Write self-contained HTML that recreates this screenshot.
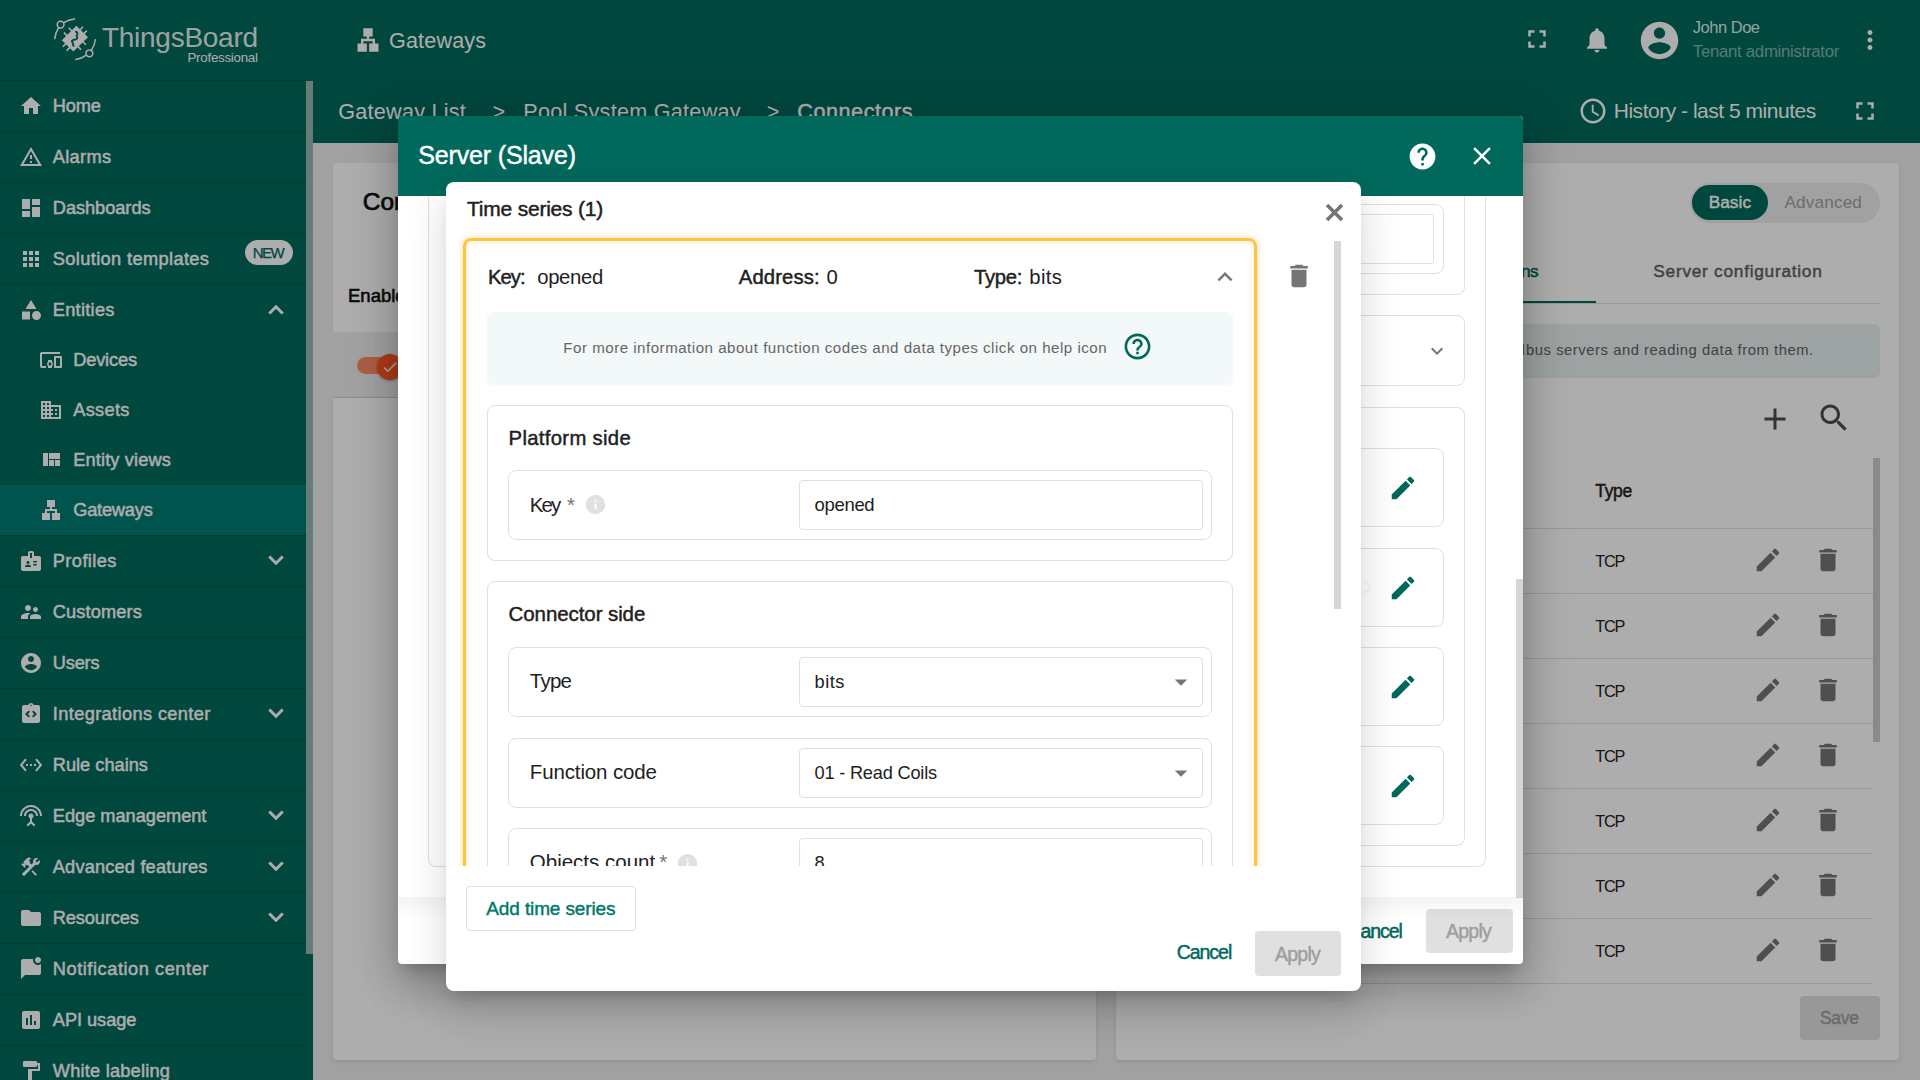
<!DOCTYPE html><html><head><meta charset="utf-8"><style>
html,body{margin:0;padding:0;width:1920px;height:1080px;overflow:hidden;background:#eeeeee;font-family:"Liberation Sans", sans-serif;}
.t{position:absolute;white-space:nowrap;line-height:1;}
svg{display:block}
</style></head><body>
<div style="position:absolute;left:0px;top:0px;width:1920px;height:80px;background:#00695c"></div>
<svg style="position:absolute;left:50px;top:14px" width="50" height="50" viewBox="50 14 50 50">
<g fill="none" stroke="#fff" stroke-width="1.5" stroke-linecap="round">
<circle cx="60.6" cy="24.6" r="3.4"/><path d="M58.6 27.6 C56.5 31 55.2 34.5 54.8 38.6"/><path d="M63.8 22.6 C67 20.5 71 19.3 74.7 18.9"/>
<circle cx="89.4" cy="53.3" r="3.4"/><path d="M91.3 50.4 C93.5 47 95 43.5 95.3 39.7"/><path d="M86.4 55.2 C83 57.6 79.5 59 76 59.6"/>
</g>
<g stroke="#fff" stroke-width="1.6" stroke-linecap="butt">
<path d="M67.4 36.1L63.9 32.6M72.2 31.3L68.7 27.8M79.6 30.3L83.1 26.8M83.4 34.1L86.9 30.6M66.3 43.3L62.8 46.8M70.2 47.1L66.7 50.6M82.4 41.3L85.9 44.8M77.5 46.1L81 49.6"/>
</g>
<path fill="#fff" d="M76.4 25.8 L88 37.2 L73.3 51.6 L61.8 40.2 Z"/>
<path fill="none" stroke="#00695c" stroke-width="1.9" d="M75.2 31.5 C77.5 31.8 78.3 34 76.6 35.8 C78.3 37.6 77 40 73.6 39.8 L72 40.8 L73.8 46.6"/>
</svg>
<div class="t" style="left:102.00px;top:23.80px;font-size:28px;color:rgba(255,255,255,0.92);letter-spacing:-0.276px;">ThingsBoard</div>
<div class="t" style="left:187.50px;top:51.24px;font-size:13.3px;color:#fff;letter-spacing:-0.247px;">Professional</div>
<svg style="position:absolute;left:354px;top:26px;overflow:visible;" width="28" height="28" viewBox="0 0 24 24"><path fill="#fff" d="M13 22h8v-7h-3v-4h-5V9h3V2H8v7h3v2H6v4H3v7h8v-7H8v-2h8v2h-3v7z"/></svg>
<div class="t" style="left:389.00px;top:31.40px;font-size:21.5px;color:#fff;letter-spacing:0.205px;">Gateways</div>
<svg style="position:absolute;left:1522px;top:24px;overflow:visible;" width="30" height="30" viewBox="0 0 24 24"><path fill="#fff" d="M7 14H5v5h5v-2H7v-3zm-2-4h2V7h3V5H5v5zm12 7h-3v2h5v-5h-2v3zM14 5v2h3v3h2V5h-5z"/></svg>
<svg style="position:absolute;left:1582px;top:25px;overflow:visible;" width="30" height="30" viewBox="0 0 24 24"><path fill="#fff" d="M12 22c1.1 0 2-.9 2-2h-4c0 1.1.89 2 2 2zm6-6v-5c0-3.07-1.64-5.64-4.5-6.32V4c0-.83-.67-1.5-1.5-1.5s-1.5.67-1.5 1.5v.68C7.63 5.36 6 7.92 6 11v5l-2 2v1h16v-1l-2-2z"/></svg>
<svg style="position:absolute;left:1637.25px;top:17.85px;overflow:visible;" width="45" height="45" viewBox="0 0 24 24"><path fill="#fff" d="M12 2C6.48 2 2 6.48 2 12s4.48 10 10 10 10-4.48 10-10S17.52 2 12 2zm0 3c1.66 0 3 1.34 3 3s-1.34 3-3 3-3-1.34-3-3 1.34-3 3-3zm0 14.2c-2.5 0-4.71-1.28-6-3.22.03-1.99 4-3.08 6-3.08 1.99 0 5.97 1.09 6 3.08-1.29 1.94-3.5 3.22-6 3.22z"/></svg>
<div class="t" style="left:1692.80px;top:19.43px;font-size:16.5px;color:rgba(255,255,255,0.9);letter-spacing:-0.489px;">John Doe</div>
<div class="t" style="left:1692.80px;top:43.58px;font-size:16.8px;color:rgba(255,255,255,0.5);letter-spacing:-0.290px;">Tenant administrator</div>
<svg style="position:absolute;left:1855px;top:25px;overflow:visible;" width="30" height="30" viewBox="0 0 24 24"><path fill="#fff" d="M12 8c1.1 0 2-.9 2-2s-.9-2-2-2-2 .9-2 2 .9 2 2 2zm0 2c-1.1 0-2 .9-2 2s.9 2 2 2 2-.9 2-2-.9-2-2-2zm0 6c-1.1 0-2 .9-2 2s.9 2 2 2 2-.9 2-2-.9-2-2-2z"/></svg>
<div style="position:absolute;left:0px;top:80px;width:306px;height:1000px;background:#00695c"></div>
<div style="position:absolute;left:306px;top:80px;width:7px;height:1000px;background:#00695c"></div>
<div style="position:absolute;left:306px;top:81px;width:7px;height:873px;background:#99b6b1"></div>
<div style="position:absolute;left:0px;top:80px;width:306px;height:1px;background:rgba(0,0,0,0.14)"></div>
<svg style="position:absolute;left:19px;top:94px;overflow:visible;" width="24" height="24" viewBox="0 0 24 24"><path fill="#fff" d="M10 20v-6h4v6h5v-8h3L12 3 2 12h3v8z"/></svg>
<div class="t" style="left:52.80px;top:97.09px;font-size:18.2px;color:#fff;-webkit-text-stroke:0.45px #fff;letter-spacing:-0.165px;">Home</div>
<div style="position:absolute;left:0px;top:131px;width:306px;height:1px;background:rgba(0,0,0,0.14)"></div>
<svg style="position:absolute;left:19px;top:145px;overflow:visible;" width="24" height="24" viewBox="0 0 24 24"><path fill="#fff" d="M12 5.99L19.53 19H4.47L12 5.99M12 2L1 21h22L12 2zm1 14h-2v2h2v-2zm0-6h-2v4h2v-4z"/></svg>
<div class="t" style="left:52.80px;top:148.09px;font-size:18.2px;color:#fff;-webkit-text-stroke:0.45px #fff;letter-spacing:0.320px;">Alarms</div>
<div style="position:absolute;left:0px;top:182px;width:306px;height:1px;background:rgba(0,0,0,0.14)"></div>
<svg style="position:absolute;left:19px;top:196px;overflow:visible;" width="24" height="24" viewBox="0 0 24 24"><path fill="#fff" d="M3 13h8V3H3v10zm0 8h8v-6H3v6zm10 0h8V11h-8v10zm0-18v6h8V3h-8z"/></svg>
<div class="t" style="left:52.80px;top:199.09px;font-size:18.2px;color:#fff;-webkit-text-stroke:0.45px #fff;letter-spacing:-0.033px;">Dashboards</div>
<div style="position:absolute;left:0px;top:233px;width:306px;height:1px;background:rgba(0,0,0,0.14)"></div>
<svg style="position:absolute;left:19px;top:247px;overflow:visible;" width="24" height="24" viewBox="0 0 24 24"><path fill="#fff" d="M4 8h4V4H4v4zm6 12h4v-4h-4v4zm-6 0h4v-4H4v4zm0-6h4v-4H4v4zm6 0h4v-4h-4v4zm6-10v4h4V4h-4zm-6 4h4V4h-4v4zm6 6h4v-4h-4v4zm0 6h4v-4h-4v4z"/></svg>
<div class="t" style="left:52.80px;top:250.09px;font-size:18.2px;color:#fff;-webkit-text-stroke:0.45px #fff;letter-spacing:0.383px;">Solution templates</div>
<div style="position:absolute;left:245px;top:240px;width:48px;height:25px;background:#fff;border-radius:13px"></div>
<div class="t" style="left:252.70px;top:245.30px;font-size:15px;color:#00695c;-webkit-text-stroke:0.25px #00695c;letter-spacing:-1.462px;">NEW</div>
<div style="position:absolute;left:0px;top:284px;width:306px;height:1px;background:rgba(0,0,0,0.14)"></div>
<svg style="position:absolute;left:19px;top:298px;overflow:visible;" width="24" height="24" viewBox="0 0 24 24"><path fill="#fff" d="M12 2l-5.5 9h11zM17.5 13a4.5 4.5 0 1 0 0 9a4.5 4.5 0 1 0 0-9zM3 13.5h8v8H3z"/></svg>
<div class="t" style="left:52.80px;top:301.09px;font-size:18.2px;color:#fff;-webkit-text-stroke:0.45px #fff;letter-spacing:0.286px;">Entities</div>
<svg style="position:absolute;left:261px;top:295px;overflow:visible;" width="30" height="30" viewBox="0 0 24 24"><path fill="#fff" stroke="#fff" stroke-width="0.45" d="M12 8l-6 6 1.41 1.41L12 10.83l4.59 4.58L18 14z"/></svg>
<svg style="position:absolute;left:39px;top:348px;overflow:visible;" width="24" height="24" viewBox="0 0 24 24"><path fill="#fff" d="M3 6h18V4H3c-1.1 0-2 .9-2 2v12c0 1.1.9 2 2 2h4v-2H3V6zm10 6H9v1.78c-.61.55-1 1.33-1 2.22s.39 1.67 1 2.22V20h4v-1.78c.61-.55 1-1.34 1-2.22s-.39-1.67-1-2.22V12zm-2 5.5c-.83 0-1.5-.67-1.5-1.5s.67-1.5 1.5-1.5 1.5.67 1.5 1.5-.67 1.5-1.5 1.5zM22 8h-6c-.5 0-1 .5-1 1v10c0 .5.5 1 1 1h6c.5 0 1-.5 1-1V9c0-.5-.5-1-1-1zm-1 10h-4v-8h4v8z"/></svg>
<div class="t" style="left:73.20px;top:351.09px;font-size:18.2px;color:#fff;-webkit-text-stroke:0.45px #fff;letter-spacing:-0.150px;">Devices</div>
<svg style="position:absolute;left:39px;top:398px;overflow:visible;" width="24" height="24" viewBox="0 0 24 24"><path fill="#fff" d="M12 7V3H2v18h20V7H12zM6 19H4v-2h2v2zm0-4H4v-2h2v2zm0-4H4V9h2v2zm0-4H4V5h2v2zm4 12H8v-2h2v2zm0-4H8v-2h2v2zm0-4H8V9h2v2zm0-4H8V5h2v2zm10 12h-8v-2h2v-2h-2v-2h2v-2h-2V9h8v10zm-2-8h-2v2h2v-2zm0 4h-2v2h2v-2z"/></svg>
<div class="t" style="left:73.20px;top:401.09px;font-size:18.2px;color:#fff;-webkit-text-stroke:0.45px #fff;letter-spacing:0.320px;">Assets</div>
<svg style="position:absolute;left:39px;top:448px;overflow:visible;" width="24" height="24" viewBox="0 0 24 24"><path fill="#fff" d="M10 18h5v-6h-5v6zm-6 0h5V5H4v13zm12 0h5v-6h-5v6zM10 5v6h11V5H10z"/></svg>
<div class="t" style="left:73.20px;top:451.09px;font-size:18.2px;color:#fff;-webkit-text-stroke:0.45px #fff;letter-spacing:0.155px;">Entity views</div>
<div style="position:absolute;left:0px;top:485px;width:306px;height:50px;background:#007d72"></div>
<svg style="position:absolute;left:39px;top:498px;overflow:visible;" width="24" height="24" viewBox="0 0 24 24"><path fill="#fff" d="M13 22h8v-7h-3v-4h-5V9h3V2H8v7h3v2H6v4H3v7h8v-7H8v-2h8v2h-3v7z"/></svg>
<div class="t" style="left:73.20px;top:501.09px;font-size:18.2px;color:#fff;-webkit-text-stroke:0.45px #fff;letter-spacing:-0.186px;">Gateways</div>
<div style="position:absolute;left:0px;top:535px;width:306px;height:1px;background:rgba(0,0,0,0.14)"></div>
<svg style="position:absolute;left:19px;top:549px;overflow:visible;" width="24" height="24" viewBox="0 0 24 24"><path fill="#fff" d="M20 7h-5V4c0-1.1-.9-2-2-2h-2c-1.1 0-2 .9-2 2v3H4c-1.1 0-2 .9-2 2v11c0 1.1.9 2 2 2h16c1.1 0 2-.9 2-2V9c0-1.1-.9-2-2-2zM9 12c.83 0 1.5.67 1.5 1.5S9.83 15 9 15s-1.5-.67-1.5-1.5S8.17 12 9 12zm3 6H6v-.43c0-.6.36-1.15.92-1.39.64-.28 1.34-.43 2.08-.43s1.44.15 2.08.43c.55.24.92.78.92 1.39V18zm1-9h-2V4h2v5zm4.25 7.5h-2.5c-.41 0-.75-.34-.75-.75s.34-.75.75-.75h2.5c.41 0 .75.34.75.75s-.34.75-.75.75zm0-3h-2.5c-.41 0-.75-.34-.75-.75s.34-.75.75-.75h2.5c.41 0 .75.34.75.75s-.34.75-.75.75z"/></svg>
<div class="t" style="left:52.80px;top:552.09px;font-size:18.2px;color:#fff;-webkit-text-stroke:0.45px #fff;letter-spacing:0.429px;">Profiles</div>
<svg style="position:absolute;left:261px;top:545.3px;overflow:visible;" width="30" height="30" viewBox="0 0 24 24"><path fill="#fff" stroke="#fff" stroke-width="0.45" d="M16.59 8.59L12 13.17 7.41 8.59 6 10l6 6 6-6z"/></svg>
<div style="position:absolute;left:0px;top:586px;width:306px;height:1px;background:rgba(0,0,0,0.14)"></div>
<svg style="position:absolute;left:19px;top:600px;overflow:visible;" width="24" height="24" viewBox="0 0 24 24"><path fill="#fff" d="M16.5 12c1.38 0 2.49-1.12 2.49-2.5S17.88 7 16.5 7C15.12 7 14 8.12 14 9.5s1.12 2.5 2.5 2.5zM9 11c1.66 0 2.99-1.34 2.99-3S10.66 5 9 5C7.34 5 6 6.34 6 8s1.34 3 3 3zm7.5 3c-1.83 0-5.5.92-5.5 2.75V19h11v-2.25c0-1.83-3.67-2.75-5.5-2.75zM9 13c-2.33 0-7 1.17-7 3.5V19h7v-2.25c0-.85.33-2.34 2.37-3.47C10.5 13.1 9.66 13 9 13z"/></svg>
<div class="t" style="left:52.80px;top:603.09px;font-size:18.2px;color:#fff;-webkit-text-stroke:0.45px #fff;letter-spacing:0.150px;">Customers</div>
<div style="position:absolute;left:0px;top:637px;width:306px;height:1px;background:rgba(0,0,0,0.14)"></div>
<svg style="position:absolute;left:19px;top:651px;overflow:visible;" width="24" height="24" viewBox="0 0 24 24"><path fill="#fff" d="M12 2C6.48 2 2 6.48 2 12s4.48 10 10 10 10-4.48 10-10S17.52 2 12 2zm0 3c1.66 0 3 1.34 3 3s-1.34 3-3 3-3-1.34-3-3 1.34-3 3-3zm0 14.2c-2.5 0-4.71-1.28-6-3.22.03-1.99 4-3.08 6-3.08 1.99 0 5.97 1.09 6 3.08-1.29 1.94-3.5 3.22-6 3.22z"/></svg>
<div class="t" style="left:52.80px;top:654.09px;font-size:18.2px;color:#fff;-webkit-text-stroke:0.45px #fff;letter-spacing:-0.200px;">Users</div>
<div style="position:absolute;left:0px;top:688px;width:306px;height:1px;background:rgba(0,0,0,0.14)"></div>
<svg style="position:absolute;left:19px;top:702px;overflow:visible;" width="24" height="24" viewBox="0 0 24 24"><path fill="#fff" d="M19 3h-4.18C14.4 1.84 13.3 1 12 1s-2.4.84-2.82 2H5c-1.1 0-2 .9-2 2v14c0 1.1.9 2 2 2h14c1.1 0 2-.9 2-2V5c0-1.1-.9-2-2-2zm-7-.25c.41 0 .75.34.75.75s-.34.75-.75.75-.75-.34-.75-.75.34-.75.75-.75zM11 14.17l-1.41 1.42L6 12l3.59-3.59L11 9.83 8.83 12 11 14.17zm3.41 1.42L13 14.17 15.17 12 13 9.83l1.41-1.42L18 12l-3.59 3.59z"/></svg>
<div class="t" style="left:52.80px;top:705.09px;font-size:18.2px;color:#fff;-webkit-text-stroke:0.45px #fff;letter-spacing:0.384px;">Integrations center</div>
<svg style="position:absolute;left:261px;top:698.3px;overflow:visible;" width="30" height="30" viewBox="0 0 24 24"><path fill="#fff" stroke="#fff" stroke-width="0.45" d="M16.59 8.59L12 13.17 7.41 8.59 6 10l6 6 6-6z"/></svg>
<div style="position:absolute;left:0px;top:739px;width:306px;height:1px;background:rgba(0,0,0,0.14)"></div>
<svg style="position:absolute;left:19px;top:753px;overflow:visible;" width="24" height="24" viewBox="0 0 24 24"><path fill="#fff" d="M7.77 6.76L6.23 5.48.82 12l5.41 6.52 1.54-1.28L3.42 12l4.35-5.24zM7 13h2v-2H7v2zm10-2h-2v2h2v-2zm-6 2h2v-2h-2v2zm6.77-7.52l-1.54 1.28L20.58 12l-4.35 5.24 1.54 1.28L23.18 12l-5.41-6.52z"/></svg>
<div class="t" style="left:52.80px;top:756.09px;font-size:18.2px;color:#fff;-webkit-text-stroke:0.45px #fff;letter-spacing:0.011px;">Rule chains</div>
<div style="position:absolute;left:0px;top:790px;width:306px;height:1px;background:rgba(0,0,0,0.14)"></div>
<svg style="position:absolute;left:19px;top:804px;overflow:visible;" width="24" height="24" viewBox="0 0 24 24"><path fill="#fff" d="M12 5c-3.87 0-7 3.13-7 7h2c0-2.76 2.24-5 5-5s5 2.24 5 5h2c0-3.87-3.13-7-7-7zm1 9.29c.88-.39 1.5-1.26 1.5-2.29 0-1.38-1.12-2.5-2.5-2.5S9.5 10.62 9.5 12c0 1.02.62 1.9 1.5 2.29v3.3L7.59 21 9 22.41l3-3 3 3L16.41 21 13 17.59v-3.3zM12 1C5.93 1 1 5.93 1 12h2c0-4.97 4.03-9 9-9s9 4.03 9 9h2c0-6.07-4.93-11-11-11z"/></svg>
<div class="t" style="left:52.80px;top:807.09px;font-size:18.2px;color:#fff;-webkit-text-stroke:0.45px #fff;letter-spacing:-0.006px;">Edge management</div>
<svg style="position:absolute;left:261px;top:800.3px;overflow:visible;" width="30" height="30" viewBox="0 0 24 24"><path fill="#fff" stroke="#fff" stroke-width="0.45" d="M16.59 8.59L12 13.17 7.41 8.59 6 10l6 6 6-6z"/></svg>
<div style="position:absolute;left:0px;top:841px;width:306px;height:1px;background:rgba(0,0,0,0.14)"></div>
<svg style="position:absolute;left:19px;top:855px;overflow:visible;" width="24" height="24" viewBox="0 0 24 24"><path fill="#fff" d="M13.78 15.17l-1.42 1.42 4.24 4.24 1.42-1.42-4.24-4.24zM17.5 10c1.93 0 3.5-1.57 3.5-3.5 0-.58-.16-1.12-.41-1.6l-2.7 2.7-1.49-1.49 2.7-2.7c-.48-.25-1.02-.41-1.6-.41C15.57 3 14 4.57 14 6.5c0 .41.08.8.21 1.16l-1.85 1.85-1.78-1.78.71-.71-1.41-1.41L12 3.49a3 3 0 0 0-4.24 0L4.22 7.03l1.41 1.41H2.81l-.71.71 3.54 3.54.71-.71V9.15l1.41 1.41.71-.71 1.78 1.78-7.41 7.41 2.12 2.12L16.34 9.79c.36.13.75.21 1.16.21z"/></svg>
<div class="t" style="left:52.80px;top:858.09px;font-size:18.2px;color:#fff;-webkit-text-stroke:0.45px #fff;letter-spacing:0.182px;">Advanced features</div>
<svg style="position:absolute;left:261px;top:851.3px;overflow:visible;" width="30" height="30" viewBox="0 0 24 24"><path fill="#fff" stroke="#fff" stroke-width="0.45" d="M16.59 8.59L12 13.17 7.41 8.59 6 10l6 6 6-6z"/></svg>
<div style="position:absolute;left:0px;top:892px;width:306px;height:1px;background:rgba(0,0,0,0.14)"></div>
<svg style="position:absolute;left:19px;top:906px;overflow:visible;" width="24" height="24" viewBox="0 0 24 24"><path fill="#fff" d="M10 4H4c-1.1 0-1.99.9-1.99 2L2 18c0 1.1.9 2 2 2h16c1.1 0 2-.9 2-2V8c0-1.1-.9-2-2-2h-8l-2-2z"/></svg>
<div class="t" style="left:52.80px;top:909.09px;font-size:18.2px;color:#fff;-webkit-text-stroke:0.45px #fff;letter-spacing:-0.099px;">Resources</div>
<svg style="position:absolute;left:261px;top:902.3px;overflow:visible;" width="30" height="30" viewBox="0 0 24 24"><path fill="#fff" stroke="#fff" stroke-width="0.45" d="M16.59 8.59L12 13.17 7.41 8.59 6 10l6 6 6-6z"/></svg>
<div style="position:absolute;left:0px;top:943px;width:306px;height:1px;background:rgba(0,0,0,0.14)"></div>
<svg style="position:absolute;left:19px;top:957px;overflow:visible;" width="24" height="24" viewBox="0 0 24 24"><path fill="#fff" d="M22 6.98V16c0 1.1-.9 2-2 2H6l-4 4V4c0-1.1.9-2 2-2h10.1c-.06.32-.1.66-.1 1 0 2.76 2.24 5 5 5 1.13 0 2.16-.39 3-1.02zM16 3c0 1.66 1.34 3 3 3s3-1.34 3-3-1.34-3-3-3-3 1.34-3 3z"/></svg>
<div class="t" style="left:52.80px;top:960.09px;font-size:18.2px;color:#fff;-webkit-text-stroke:0.45px #fff;letter-spacing:0.556px;">Notification center</div>
<div style="position:absolute;left:0px;top:994px;width:306px;height:1px;background:rgba(0,0,0,0.14)"></div>
<svg style="position:absolute;left:19px;top:1008px;overflow:visible;" width="24" height="24" viewBox="0 0 24 24"><path fill="#fff" d="M19 3H5c-1.1 0-2 .9-2 2v14c0 1.1.9 2 2 2h14c1.1 0 2-.9 2-2V5c0-1.1-.9-2-2-2zM9 17H7v-7h2v7zm4 0h-2V7h2v10zm4 0h-2v-4h2v4z"/></svg>
<div class="t" style="left:52.80px;top:1011.09px;font-size:18.2px;color:#fff;-webkit-text-stroke:0.45px #fff;letter-spacing:-0.037px;">API usage</div>
<div style="position:absolute;left:0px;top:1045px;width:306px;height:1px;background:rgba(0,0,0,0.14)"></div>
<svg style="position:absolute;left:19px;top:1059px;overflow:visible;" width="24" height="24" viewBox="0 0 24 24"><path fill="#fff" d="M18 4V3c0-.55-.45-1-1-1H5c-.55 0-1 .45-1 1v4c0 .55.45 1 1 1h12c.55 0 1-.45 1-1V6h1v4H9v11c0 .55.45 1 1 1h2c.55 0 1-.45 1-1v-9h8V4h-3z"/></svg>
<div class="t" style="left:52.80px;top:1062.09px;font-size:18.2px;color:#fff;-webkit-text-stroke:0.45px #fff;letter-spacing:0.223px;">White labeling</div>
<div style="position:absolute;left:313px;top:80px;width:1607px;height:63px;background:#00695c"></div>
<div class="t" style="left:338.30px;top:101.42px;font-size:21.6px;color:#fff;letter-spacing:0.241px;">Gateway List</div>
<div class="t" style="left:492.50px;top:101.42px;font-size:21.6px;color:#fff;">&gt;</div>
<div class="t" style="left:523.30px;top:101.42px;font-size:21.6px;color:#fff;letter-spacing:0.270px;">Pool System Gateway</div>
<div class="t" style="left:766.70px;top:101.42px;font-size:21.6px;color:#fff;">&gt;</div>
<div class="t" style="left:797.30px;top:101.42px;font-size:21.6px;color:#fff;-webkit-text-stroke:0.45px #fff;letter-spacing:0.546px;">Connectors</div>
<svg style="position:absolute;left:1578px;top:96px;overflow:visible;" width="30" height="30" viewBox="0 0 24 24"><path fill="#fff" d="M11.99 2C6.47 2 2 6.48 2 12s4.47 10 9.99 10C17.52 22 22 17.52 22 12S17.52 2 11.99 2zM12 20c-4.42 0-8-3.58-8-8s3.58-8 8-8 8 3.58 8 8-3.58 8-8 8zm.5-13H11v6l5.25 3.15.75-1.23-4.5-2.67z"/></svg>
<div class="t" style="left:1613.75px;top:99.72px;font-size:21px;color:#fff;letter-spacing:-0.481px;">History - last 5 minutes</div>
<svg style="position:absolute;left:1850px;top:96px;overflow:visible;" width="30" height="30" viewBox="0 0 24 24"><path fill="#fff" d="M7 14H5v5h5v-2H7v-3zm-2-4h2V7h3V5H5v5zm12 7h-3v2h5v-5h-2v3zM14 5v2h3v3h2V5h-5z"/></svg>
<div style="position:absolute;left:313px;top:143px;width:1607px;height:937px;background:#eeeeee"></div>
<div style="position:absolute;left:333px;top:163px;width:763px;height:169px;background:#fff;border-radius:4px 4px 0 0"></div>
<div style="position:absolute;left:333px;top:398px;width:763px;height:662px;background:#fff;border-radius:0 0 4px 4px;box-shadow:0 2px 5px rgba(0,0,0,0.1)"></div>
<div style="position:absolute;left:333px;top:397px;width:763px;height:1px;background:rgba(0,0,0,0.12)"></div>
<div class="t" style="left:362.80px;top:189.76px;font-size:24.5px;color:#111;-webkit-text-stroke:0.7px #111;">Connectors</div>
<div class="t" style="left:348.00px;top:286.54px;font-size:18.5px;color:#111;-webkit-text-stroke:0.6px #111;">Enabled</div>
<div style="position:absolute;left:357px;top:357px;width:40px;height:17px;background:#ff8a65;border-radius:9px"></div>
<div style="position:absolute;left:377px;top:354px;width:26px;height:26px;border-radius:50%;background:#ff5722;box-shadow:0 1px 3px rgba(0,0,0,.3)"></div>
<svg style="position:absolute;left:381px;top:358px;overflow:visible;" width="18" height="18" viewBox="0 0 24 24"><path fill="#fff" d="M9 16.17L4.83 12l-1.42 1.41L9 19 21 7l-1.41-1.41z"/></svg>
<div style="position:absolute;left:1116px;top:163px;width:783px;height:897px;background:#fff;border-radius:4px;box-shadow:0 2px 5px rgba(0,0,0,0.1)"></div>
<div style="position:absolute;left:1690px;top:183px;width:190px;height:40px;background:#eeeeee;border-radius:20px"></div>
<div style="position:absolute;left:1692px;top:185px;width:76px;height:35px;background:#00695c;border-radius:18px"></div>
<div class="t" style="left:1708.75px;top:194.04px;font-size:17.2px;color:#fff;-webkit-text-stroke:0.45px #fff;letter-spacing:0.049px;">Basic</div>
<div class="t" style="left:1784.50px;top:194.04px;font-size:17.2px;color:#a0a0a0;letter-spacing:0.137px;">Advanced</div>
<div class="t" style="left:1400.00px;top:263.06px;font-size:17.3px;color:#00695c;-webkit-text-stroke:0.45px #00695c;letter-spacing:-0.661px;">Master connections</div>
<div style="position:absolute;left:1136px;top:301px;width:460px;height:2px;background:#00695c"></div>
<div style="position:absolute;left:1136px;top:303px;width:744px;height:1px;background:rgba(0,0,0,0.12)"></div>
<div class="t" style="left:1653.30px;top:263.06px;font-size:17.3px;color:#616161;-webkit-text-stroke:0.45px #616161;letter-spacing:0.730px;">Server configuration</div>
<div style="position:absolute;left:1136px;top:324px;width:744px;height:54px;background:#e8f0ef;border-radius:6px"></div>
<div class="t" style="left:1526.00px;top:343.17px;font-size:14.8px;color:#616161;letter-spacing:0.546px;">bus servers and reading data from them.</div>
<div class="t" style="left:1516.50px;top:343.17px;font-size:14.8px;color:#616161;">d</div>
<svg style="position:absolute;left:1757px;top:401px;overflow:visible;" width="36" height="36" viewBox="0 0 24 24"><path fill="rgba(0,0,0,0.7)" d="M19 13h-6v6h-2v-6H5v-2h6V5h2v6h6v2z"/></svg>
<svg style="position:absolute;left:1816px;top:400px;overflow:visible;" width="36" height="36" viewBox="0 0 24 24"><path fill="rgba(0,0,0,0.7)" d="M15.5 14h-.79l-.28-.27C15.41 12.59 16 11.11 16 9.5 16 5.91 13.09 3 9.5 3S3 5.91 3 9.5 5.91 16 9.5 16c1.61 0 3.09-.59 4.23-1.57l.27.28v.79l5 4.99L20.49 19l-4.99-5zm-6 0C7.01 14 5 11.99 5 9.5S7.01 5 9.5 5 14 7.01 14 9.5 11.99 14 9.5 14z"/></svg>
<div class="t" style="left:1595.30px;top:482.69px;font-size:17.5px;color:#212121;-webkit-text-stroke:0.45px #212121;letter-spacing:-0.325px;">Type</div>
<div style="position:absolute;left:1136px;top:528px;width:737px;height:1px;background:rgba(0,0,0,0.12)"></div>
<div class="t" style="left:1595.30px;top:552.70px;font-size:16.3px;color:#212121;letter-spacing:-1.300px;">TCP</div>
<svg style="position:absolute;left:1753px;top:545px;overflow:visible;" width="30" height="30" viewBox="0 0 24 24"><path fill="rgba(0,0,0,0.54)" d="M3 17.25V21h3.75L17.81 9.94l-3.75-3.75L3 17.25zM20.71 7.04c.39-.39.39-1.02 0-1.41l-2.34-2.34c-.39-.39-1.02-.39-1.41 0l-1.83 1.83 3.75 3.75 1.83-1.83z"/></svg>
<svg style="position:absolute;left:1813px;top:545px;overflow:visible;" width="30" height="30" viewBox="0 0 24 24"><path fill="rgba(0,0,0,0.54)" d="M6 19c0 1.1.9 2 2 2h8c1.1 0 2-.9 2-2V7H6v12zM19 4h-3.5l-1-1h-5l-1 1H5v2h14V4z"/></svg>
<div style="position:absolute;left:1136px;top:593px;width:737px;height:1px;background:rgba(0,0,0,0.12)"></div>
<div class="t" style="left:1595.30px;top:617.70px;font-size:16.3px;color:#212121;letter-spacing:-1.300px;">TCP</div>
<svg style="position:absolute;left:1753px;top:610px;overflow:visible;" width="30" height="30" viewBox="0 0 24 24"><path fill="rgba(0,0,0,0.54)" d="M3 17.25V21h3.75L17.81 9.94l-3.75-3.75L3 17.25zM20.71 7.04c.39-.39.39-1.02 0-1.41l-2.34-2.34c-.39-.39-1.02-.39-1.41 0l-1.83 1.83 3.75 3.75 1.83-1.83z"/></svg>
<svg style="position:absolute;left:1813px;top:610px;overflow:visible;" width="30" height="30" viewBox="0 0 24 24"><path fill="rgba(0,0,0,0.54)" d="M6 19c0 1.1.9 2 2 2h8c1.1 0 2-.9 2-2V7H6v12zM19 4h-3.5l-1-1h-5l-1 1H5v2h14V4z"/></svg>
<div style="position:absolute;left:1136px;top:658px;width:737px;height:1px;background:rgba(0,0,0,0.12)"></div>
<div class="t" style="left:1595.30px;top:682.70px;font-size:16.3px;color:#212121;letter-spacing:-1.300px;">TCP</div>
<svg style="position:absolute;left:1753px;top:675px;overflow:visible;" width="30" height="30" viewBox="0 0 24 24"><path fill="rgba(0,0,0,0.54)" d="M3 17.25V21h3.75L17.81 9.94l-3.75-3.75L3 17.25zM20.71 7.04c.39-.39.39-1.02 0-1.41l-2.34-2.34c-.39-.39-1.02-.39-1.41 0l-1.83 1.83 3.75 3.75 1.83-1.83z"/></svg>
<svg style="position:absolute;left:1813px;top:675px;overflow:visible;" width="30" height="30" viewBox="0 0 24 24"><path fill="rgba(0,0,0,0.54)" d="M6 19c0 1.1.9 2 2 2h8c1.1 0 2-.9 2-2V7H6v12zM19 4h-3.5l-1-1h-5l-1 1H5v2h14V4z"/></svg>
<div style="position:absolute;left:1136px;top:723px;width:737px;height:1px;background:rgba(0,0,0,0.12)"></div>
<div class="t" style="left:1595.30px;top:747.70px;font-size:16.3px;color:#212121;letter-spacing:-1.300px;">TCP</div>
<svg style="position:absolute;left:1753px;top:740px;overflow:visible;" width="30" height="30" viewBox="0 0 24 24"><path fill="rgba(0,0,0,0.54)" d="M3 17.25V21h3.75L17.81 9.94l-3.75-3.75L3 17.25zM20.71 7.04c.39-.39.39-1.02 0-1.41l-2.34-2.34c-.39-.39-1.02-.39-1.41 0l-1.83 1.83 3.75 3.75 1.83-1.83z"/></svg>
<svg style="position:absolute;left:1813px;top:740px;overflow:visible;" width="30" height="30" viewBox="0 0 24 24"><path fill="rgba(0,0,0,0.54)" d="M6 19c0 1.1.9 2 2 2h8c1.1 0 2-.9 2-2V7H6v12zM19 4h-3.5l-1-1h-5l-1 1H5v2h14V4z"/></svg>
<div style="position:absolute;left:1136px;top:788px;width:737px;height:1px;background:rgba(0,0,0,0.12)"></div>
<div class="t" style="left:1595.30px;top:812.70px;font-size:16.3px;color:#212121;letter-spacing:-1.300px;">TCP</div>
<svg style="position:absolute;left:1753px;top:805px;overflow:visible;" width="30" height="30" viewBox="0 0 24 24"><path fill="rgba(0,0,0,0.54)" d="M3 17.25V21h3.75L17.81 9.94l-3.75-3.75L3 17.25zM20.71 7.04c.39-.39.39-1.02 0-1.41l-2.34-2.34c-.39-.39-1.02-.39-1.41 0l-1.83 1.83 3.75 3.75 1.83-1.83z"/></svg>
<svg style="position:absolute;left:1813px;top:805px;overflow:visible;" width="30" height="30" viewBox="0 0 24 24"><path fill="rgba(0,0,0,0.54)" d="M6 19c0 1.1.9 2 2 2h8c1.1 0 2-.9 2-2V7H6v12zM19 4h-3.5l-1-1h-5l-1 1H5v2h14V4z"/></svg>
<div style="position:absolute;left:1136px;top:853px;width:737px;height:1px;background:rgba(0,0,0,0.12)"></div>
<div class="t" style="left:1595.30px;top:877.70px;font-size:16.3px;color:#212121;letter-spacing:-1.300px;">TCP</div>
<svg style="position:absolute;left:1753px;top:870px;overflow:visible;" width="30" height="30" viewBox="0 0 24 24"><path fill="rgba(0,0,0,0.54)" d="M3 17.25V21h3.75L17.81 9.94l-3.75-3.75L3 17.25zM20.71 7.04c.39-.39.39-1.02 0-1.41l-2.34-2.34c-.39-.39-1.02-.39-1.41 0l-1.83 1.83 3.75 3.75 1.83-1.83z"/></svg>
<svg style="position:absolute;left:1813px;top:870px;overflow:visible;" width="30" height="30" viewBox="0 0 24 24"><path fill="rgba(0,0,0,0.54)" d="M6 19c0 1.1.9 2 2 2h8c1.1 0 2-.9 2-2V7H6v12zM19 4h-3.5l-1-1h-5l-1 1H5v2h14V4z"/></svg>
<div style="position:absolute;left:1136px;top:918px;width:737px;height:1px;background:rgba(0,0,0,0.12)"></div>
<div class="t" style="left:1595.30px;top:942.70px;font-size:16.3px;color:#212121;letter-spacing:-1.300px;">TCP</div>
<svg style="position:absolute;left:1753px;top:935px;overflow:visible;" width="30" height="30" viewBox="0 0 24 24"><path fill="rgba(0,0,0,0.54)" d="M3 17.25V21h3.75L17.81 9.94l-3.75-3.75L3 17.25zM20.71 7.04c.39-.39.39-1.02 0-1.41l-2.34-2.34c-.39-.39-1.02-.39-1.41 0l-1.83 1.83 3.75 3.75 1.83-1.83z"/></svg>
<svg style="position:absolute;left:1813px;top:935px;overflow:visible;" width="30" height="30" viewBox="0 0 24 24"><path fill="rgba(0,0,0,0.54)" d="M6 19c0 1.1.9 2 2 2h8c1.1 0 2-.9 2-2V7H6v12zM19 4h-3.5l-1-1h-5l-1 1H5v2h14V4z"/></svg>
<div style="position:absolute;left:1136px;top:983px;width:737px;height:1px;background:rgba(0,0,0,0.12)"></div>
<div style="position:absolute;left:1873px;top:458px;width:7px;height:284px;background:rgba(0,0,0,0.2)"></div>
<div style="position:absolute;left:1800px;top:996px;width:80px;height:44px;background:rgba(0,0,0,0.12);border-radius:4px"></div>
<div class="t" style="left:1820.00px;top:1009.59px;font-size:17.5px;color:#9e9e9e;-webkit-text-stroke:0.45px #9e9e9e;letter-spacing:-0.300px;">Save</div>
<div style="position:absolute;left:0px;top:0px;width:1920px;height:1080px;background:rgba(0,0,0,0.32)"></div>
<div style="position:absolute;left:398px;top:116px;width:1125px;height:848px;background:#fff;border-radius:4px;box-shadow:0 11px 15px -7px rgba(0,0,0,.2),0 24px 38px 3px rgba(0,0,0,.14),0 9px 46px 8px rgba(0,0,0,.12);overflow:hidden">
<div style="position:absolute;left:0px;top:0px;width:1125px;height:80px;background:#00695c"></div>
</div>
<div class="t" style="left:418.20px;top:142.74px;font-size:25px;color:#fff;-webkit-text-stroke:0.45px #fff;letter-spacing:-0.150px;">Server (Slave)</div>
<svg style="position:absolute;left:1407px;top:141px;overflow:visible;" width="31" height="31" viewBox="0 0 24 24"><path fill="#fff" d="M12 2C6.48 2 2 6.48 2 12s4.48 10 10 10 10-4.48 10-10S17.52 2 12 2zm1 17h-2v-2h2v2zm2.07-7.75l-.9.92C13.45 12.9 13 13.5 13 15h-2v-.5c0-1.1.45-2.1 1.17-2.83l1.24-1.26c.37-.36.59-.86.59-1.41 0-1.1-.9-2-2-2s-2 .9-2 2H8c0-2.21 1.79-4 4-4s4 1.79 4 4c0 .88-.36 1.68-.93 2.25z"/></svg>
<svg style="position:absolute;left:1467px;top:141px;overflow:visible;" width="30" height="30" viewBox="0 0 24 24"><path fill="#fff" d="M19 6.41L17.59 5 12 10.59 6.41 5 5 6.41 10.59 12 5 17.59 6.41 19 12 13.41 17.59 19 19 17.59 13.41 12z"/></svg>
<div style="position:absolute;left:428px;top:196px;width:1058px;height:671px;border:1px solid #e0e0e0;border-top:none;border-radius:0 0 8px 8px;box-sizing:border-box"></div>
<div style="position:absolute;left:1000px;top:150px;width:465px;height:145px;border:1px solid #e0e0e0;border-radius:8px;box-sizing:border-box;clip-path:inset(46px 0 0 0)"></div>
<div style="position:absolute;left:1000px;top:204px;width:444px;height:70px;border:1px solid #e0e0e0;border-radius:8px;box-sizing:border-box"></div>
<div style="position:absolute;left:1000px;top:214px;width:434px;height:50px;border:1px solid #e0e0e0;border-radius:4px;box-sizing:border-box"></div>
<div style="position:absolute;left:1000px;top:315px;width:465px;height:71px;border:1px solid #e0e0e0;border-radius:8px;box-sizing:border-box"></div>
<svg style="position:absolute;left:1425px;top:339px;overflow:visible;" width="24" height="24" viewBox="0 0 24 24"><path fill="rgba(0,0,0,0.54)" d="M16.59 8.59L12 13.17 7.41 8.59 6 10l6 6 6-6z"/></svg>
<div style="position:absolute;left:1000px;top:407px;width:465px;height:439px;border:1px solid #e0e0e0;border-radius:8px;box-sizing:border-box"></div>
<div style="position:absolute;left:1000px;top:448px;width:444px;height:79px;border:1px solid #e0e0e0;border-radius:8px;box-sizing:border-box"></div>
<svg style="position:absolute;left:1388px;top:472.5px;overflow:visible;" width="30" height="30" viewBox="0 0 24 24"><path fill="#00695c" d="M3 17.25V21h3.75L17.81 9.94l-3.75-3.75L3 17.25zM20.71 7.04c.39-.39.39-1.02 0-1.41l-2.34-2.34c-.39-.39-1.02-.39-1.41 0l-1.83 1.83 3.75 3.75 1.83-1.83z"/></svg>
<div style="position:absolute;left:1000px;top:548px;width:444px;height:79px;border:1px solid #e0e0e0;border-radius:8px;box-sizing:border-box"></div>
<svg style="position:absolute;left:1388px;top:572.5px;overflow:visible;" width="30" height="30" viewBox="0 0 24 24"><path fill="#00695c" d="M3 17.25V21h3.75L17.81 9.94l-3.75-3.75L3 17.25zM20.71 7.04c.39-.39.39-1.02 0-1.41l-2.34-2.34c-.39-.39-1.02-.39-1.41 0l-1.83 1.83 3.75 3.75 1.83-1.83z"/></svg>
<div style="position:absolute;left:1000px;top:647px;width:444px;height:79px;border:1px solid #e0e0e0;border-radius:8px;box-sizing:border-box"></div>
<svg style="position:absolute;left:1388px;top:671.5px;overflow:visible;" width="30" height="30" viewBox="0 0 24 24"><path fill="#00695c" d="M3 17.25V21h3.75L17.81 9.94l-3.75-3.75L3 17.25zM20.71 7.04c.39-.39.39-1.02 0-1.41l-2.34-2.34c-.39-.39-1.02-.39-1.41 0l-1.83 1.83 3.75 3.75 1.83-1.83z"/></svg>
<div style="position:absolute;left:1000px;top:746px;width:444px;height:79px;border:1px solid #e0e0e0;border-radius:8px;box-sizing:border-box"></div>
<svg style="position:absolute;left:1388px;top:770.5px;overflow:visible;" width="30" height="30" viewBox="0 0 24 24"><path fill="#00695c" d="M3 17.25V21h3.75L17.81 9.94l-3.75-3.75L3 17.25zM20.71 7.04c.39-.39.39-1.02 0-1.41l-2.34-2.34c-.39-.39-1.02-.39-1.41 0l-1.83 1.83 3.75 3.75 1.83-1.83z"/></svg>
<div style="position:absolute;left:1361px;top:579px;width:0;height:0;border-top:8px solid transparent;border-bottom:8px solid transparent;border-left:8px solid #fff;filter:drop-shadow(1px 0 2px rgba(0,0,0,0.08))"></div>
<div style="position:absolute;left:1516px;top:579px;width:7px;height:319px;background:#d6d6d6"></div>
<div style="position:absolute;left:398px;top:897px;width:1125px;height:22px;background:linear-gradient(rgba(0,0,0,0.045),rgba(0,0,0,0))"></div>
<div class="t" style="left:1347.40px;top:921.79px;font-size:19.5px;color:#00695c;-webkit-text-stroke:0.45px #00695c;letter-spacing:-1.029px;">Cancel</div>
<div style="position:absolute;left:1426px;top:909px;width:87px;height:44px;background:rgba(0,0,0,0.12);border-radius:4px"></div>
<div class="t" style="left:1446.00px;top:921.79px;font-size:19.5px;color:#9e9e9e;-webkit-text-stroke:0.45px #9e9e9e;letter-spacing:-0.762px;">Apply</div>
<div style="position:absolute;left:446px;top:182px;width:915px;height:809px;background:#fff;border-radius:8px;box-shadow:0 11px 15px -7px rgba(0,0,0,.15),0 24px 38px 3px rgba(0,0,0,.08),0 9px 46px 8px rgba(0,0,0,.05)"></div>
<div class="t" style="left:467.00px;top:198.32px;font-size:21px;color:#212121;-webkit-text-stroke:0.45px #212121;letter-spacing:-0.216px;">Time series (1)</div>
<svg style="position:absolute;left:1324px;top:202px" width="21" height="21" viewBox="0 0 21 21"><path d="M3 3L18 18M18 3L3 18" stroke="#757575" stroke-width="3.6" stroke-linecap="butt"/></svg>
<div style="position:absolute;left:446px;top:230px;width:915px;height:636px;overflow:hidden">
<div style="position:absolute;left:-446px;top:-230px;width:1920px;height:1080px">
<div style="position:absolute;left:463px;top:238px;width:794px;height:900px;border:3px solid #fcc53a;border-radius:8px;box-sizing:border-box;box-shadow:0 0 7px rgba(255,160,50,0.4),inset 0 0 6px rgba(255,160,50,0.22)"></div>
<div class="t" style="left:488.00px;top:266.62px;font-size:20.3px;color:#212121;-webkit-text-stroke:0.45px #212121;letter-spacing:-1.000px;">Key:</div>
<div class="t" style="left:537.20px;top:266.62px;font-size:20.3px;color:#212121;letter-spacing:-0.340px;">opened</div>
<div class="t" style="left:738.80px;top:266.62px;font-size:20.3px;color:#212121;-webkit-text-stroke:0.45px #212121;letter-spacing:0.102px;">Address:</div>
<div class="t" style="left:826.50px;top:266.62px;font-size:20.3px;color:#212121;">0</div>
<div class="t" style="left:974.00px;top:266.62px;font-size:20.3px;color:#212121;-webkit-text-stroke:0.45px #212121;letter-spacing:-0.308px;">Type:</div>
<div class="t" style="left:1029.30px;top:266.62px;font-size:20.3px;color:#212121;letter-spacing:0.378px;">bits</div>
<svg style="position:absolute;left:1210px;top:262px;overflow:visible;" width="30" height="30" viewBox="0 0 24 24"><path fill="rgba(0,0,0,0.54)" d="M12 8l-6 6 1.41 1.41L12 10.83l4.59 4.58L18 14z"/></svg>
<div style="position:absolute;left:487px;top:312px;width:746px;height:73px;background:#f3f8f8;border-radius:6px"></div>
<div class="t" style="left:563.30px;top:340.12px;font-size:15.1px;color:#666;letter-spacing:0.505px;">For more information about function codes and data types click on help icon</div>
<svg style="position:absolute;left:1122px;top:331px;overflow:visible;" width="31" height="31" viewBox="0 0 24 24"><path fill="#00695c" d="M11 18h2v-2h-2v2zm1-16C6.48 2 2 6.48 2 12s4.48 10 10 10 10-4.48 10-10S17.52 2 12 2zm0 18c-4.41 0-8-3.59-8-8s3.59-8 8-8 8 3.59 8 8-3.59 8-8 8zm0-14c-2.21 0-4 1.79-4 4h2c0-1.1.9-2 2-2s2 .9 2 2c0 2-3 1.75-3 5h2c0-2.25 3-2.5 3-5 0-2.21-1.79-4-4-4z"/></svg>
<div style="position:absolute;left:487px;top:405px;width:746px;height:156px;border:1px solid #e0e0e0;border-radius:8px;box-sizing:border-box"></div>
<div class="t" style="left:508.60px;top:427.72px;font-size:20.3px;color:#212121;-webkit-text-stroke:0.45px #212121;letter-spacing:0.312px;">Platform side</div>
<div style="position:absolute;left:508px;top:470px;width:704px;height:70px;border:1px solid #e0e0e0;border-radius:8px;box-sizing:border-box"></div>
<div class="t" style="left:529.80px;top:494.85px;font-size:20.5px;color:#212121;letter-spacing:-1.981px;">Key</div>
<div class="t" style="left:567.00px;top:494.85px;font-size:20.5px;color:#757575;">*</div>
<svg style="position:absolute;left:584px;top:493px;overflow:visible;" width="23" height="23" viewBox="0 0 24 24"><path fill="rgba(0,0,0,0.12)" d="M12 2C6.48 2 2 6.48 2 12s4.48 10 10 10 10-4.48 10-10S17.52 2 12 2zm1 15h-2v-6h2v6zm0-8h-2V7h2v2z"/></svg>
<div style="position:absolute;left:799px;top:480px;width:404px;height:50px;border:1px solid #e0e0e0;border-radius:4px;box-sizing:border-box"></div>
<div class="t" style="left:814.50px;top:495.84px;font-size:18.5px;color:#212121;letter-spacing:-0.319px;">opened</div>
<div style="position:absolute;left:487px;top:581px;width:746px;height:700px;border:1px solid #e0e0e0;border-radius:8px;box-sizing:border-box"></div>
<div class="t" style="left:508.60px;top:604.05px;font-size:20.5px;color:#212121;-webkit-text-stroke:0.45px #212121;letter-spacing:-0.089px;">Connector side</div>
<div style="position:absolute;left:508px;top:647px;width:704px;height:70px;border:1px solid #e0e0e0;border-radius:8px;box-sizing:border-box"></div>
<div class="t" style="left:529.80px;top:670.85px;font-size:20.5px;color:#212121;letter-spacing:-0.762px;">Type</div>
<div style="position:absolute;left:799px;top:657px;width:404px;height:50px;border:1px solid #e0e0e0;border-radius:4px;box-sizing:border-box"></div>
<div class="t" style="left:814.50px;top:673.09px;font-size:18.2px;color:#212121;letter-spacing:0.533px;">bits</div>
<svg style="position:absolute;left:1166px;top:667px;overflow:visible;" width="30" height="30" viewBox="0 0 24 24"><path fill="rgba(0,0,0,0.54)" d="M7 10l5 5 5-5z"/></svg>
<div style="position:absolute;left:508px;top:738px;width:704px;height:70px;border:1px solid #e0e0e0;border-radius:8px;box-sizing:border-box"></div>
<div class="t" style="left:529.80px;top:761.85px;font-size:20.5px;color:#212121;letter-spacing:-0.137px;">Function code</div>
<div style="position:absolute;left:799px;top:748px;width:404px;height:50px;border:1px solid #e0e0e0;border-radius:4px;box-sizing:border-box"></div>
<div class="t" style="left:814.50px;top:764.09px;font-size:18.2px;color:#212121;letter-spacing:-0.193px;">01 - Read Coils</div>
<svg style="position:absolute;left:1166px;top:758px;overflow:visible;" width="30" height="30" viewBox="0 0 24 24"><path fill="rgba(0,0,0,0.54)" d="M7 10l5 5 5-5z"/></svg>
<div style="position:absolute;left:508px;top:828px;width:704px;height:70px;border:1px solid #e0e0e0;border-radius:8px;box-sizing:border-box"></div>
<div class="t" style="left:529.80px;top:851.85px;font-size:20.5px;color:#212121;">Objects count</div>
<div class="t" style="left:659.30px;top:851.85px;font-size:20.5px;color:#757575;">*</div>
<svg style="position:absolute;left:676px;top:852px;overflow:visible;" width="23" height="23" viewBox="0 0 24 24"><path fill="rgba(0,0,0,0.12)" d="M12 2C6.48 2 2 6.48 2 12s4.48 10 10 10 10-4.48 10-10S17.52 2 12 2zm1 15h-2v-6h2v6zm0-8h-2V7h2v2z"/></svg>
<div style="position:absolute;left:799px;top:838px;width:404px;height:50px;border:1px solid #e0e0e0;border-radius:4px;box-sizing:border-box"></div>
<div class="t" style="left:814.50px;top:854.09px;font-size:18.2px;color:#212121;">8</div>
</div></div>
<svg style="position:absolute;left:1284px;top:261px;overflow:visible;" width="30" height="30" viewBox="0 0 24 24"><path fill="rgba(0,0,0,0.54)" d="M6 19c0 1.1.9 2 2 2h8c1.1 0 2-.9 2-2V7H6v12zM19 4h-3.5l-1-1h-5l-1 1H5v2h14V4z"/></svg>
<div style="position:absolute;left:1334px;top:241px;width:7px;height:368px;background:#d6d6d6"></div>
<div style="position:absolute;left:466px;top:886px;width:170px;height:45px;border:1px solid #e0e0e0;border-radius:4px;box-sizing:border-box"></div>
<div class="t" style="left:486.30px;top:899.22px;font-size:19px;color:#00796b;-webkit-text-stroke:0.45px #00796b;letter-spacing:-0.122px;">Add time series</div>
<div class="t" style="left:1176.70px;top:943.49px;font-size:19.5px;color:#00695c;-webkit-text-stroke:0.45px #00695c;letter-spacing:-1.029px;">Cancel</div>
<div style="position:absolute;left:1255px;top:931px;width:86px;height:45px;background:rgba(0,0,0,0.12);border-radius:4px"></div>
<div class="t" style="left:1275.00px;top:944.99px;font-size:19.5px;color:#9e9e9e;-webkit-text-stroke:0.45px #9e9e9e;letter-spacing:-0.762px;">Apply</div>
</body></html>
